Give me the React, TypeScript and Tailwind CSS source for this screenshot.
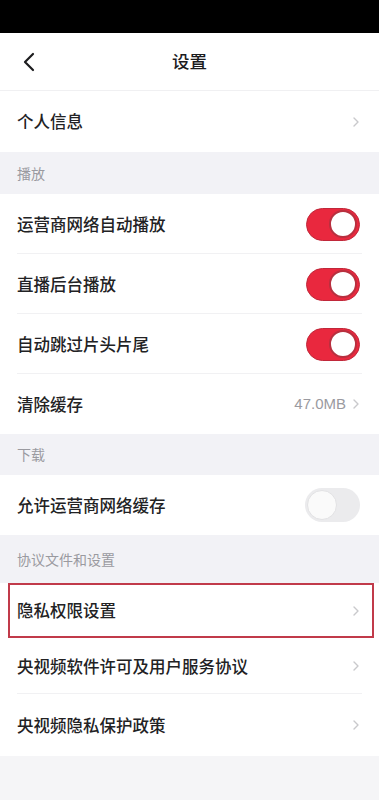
import React from "react";

const Chevron = () => (
  <svg width="8" height="12" viewBox="0 0 8 12" fill="none">
    <path d="M2 2l4 4-4 4" stroke="#c9c9cc" strokeWidth="1.4" strokeLinecap="round" strokeLinejoin="round" />
  </svg>
);

const Toggle = ({ on }: { on: boolean }) =>
  on ? (
    <div className="w-[54px] h-[33px] rounded-full bg-[#e9283e] border border-[#c0283a] flex items-center justify-end pr-[2px]">
      <div className="w-[28px] h-[28px] rounded-full bg-white border-2 border-[#b8303f]" />
    </div>
  ) : (
    <div className="w-[55px] h-[34px] rounded-full bg-[#ebebed] flex items-center justify-start pl-[2px]">
      <div className="w-[30px] h-[30px] rounded-full bg-[#fafafa] border border-[#e2e2e4]" />
    </div>
  );

const Row = ({
  label,
  right,
  h = "h-[60px]",
  divider = true,
  highlight = false,
}: {
  label: string;
  right: React.ReactNode;
  h?: string;
  divider?: boolean;
  highlight?: boolean;
}) => (
  <div className={`relative bg-white ${h} flex items-center px-[17px]`}>
    <span className="flex-1 text-[16.5px] font-medium text-[#222224]">{label}</span>
    <div className="flex items-center gap-[6px] pr-[2px]">{right}</div>
    {divider && <div className="absolute left-[17px] right-[17px] bottom-0 h-px bg-[#f1f1f3]" />}
    {highlight && <div className="absolute left-[8px] right-[5px] top-0 bottom-0 border-2 border-[#c13a4a]" />}
  </div>
);

const Section = ({ label, h }: { label: string; h: string }) => (
  <div className={`bg-[#f2f2f6] ${h} flex items-center px-[17px] text-[14px] text-[#9a9aa0]`}>{label}</div>
);

export default function App() {
  return (
    <div
      className="w-[379px] min-h-[800px] bg-[#f5f5f7] flex flex-col"
      style={{ fontFamily: '"Noto Sans CJK SC", "Noto Sans", sans-serif' }}
    >
      <div className="h-[33px] bg-black" />
      <div className="relative h-[58px] bg-white flex items-center justify-center border-b border-[#f0f0f2]">
        <div className="absolute left-[22px] top-0 bottom-0 flex items-center">
          <svg width="14" height="20" viewBox="0 0 14 20" fill="none">
            <path d="M11 2L3 10l8 8" stroke="#1c1c1e" strokeWidth="2.2" strokeLinecap="round" strokeLinejoin="round" />
          </svg>
        </div>
        <span className="text-[17.5px] font-medium text-[#1c1c1e]">设置</span>
      </div>
      <Row label="个人信息" right={<Chevron />} h="h-[61px]" divider={false} />
      <Section label="播放" h="h-[42px]" />
      <Row label="运营商网络自动播放" right={<Toggle on />} />
      <Row label="直播后台播放" right={<Toggle on />} />
      <Row label="自动跳过片头片尾" right={<Toggle on />} />
      <Row
        label="清除缓存"
        right={
          <>
            <span className="text-[15px] text-[#9a9aa0]" style={{ fontFamily: '"Liberation Sans", sans-serif' }}>47.0MB</span>
            <Chevron />
          </>
        }
        divider={false}
      />
      <Section label="下载" h="h-[41px]" />
      <Row label="允许运营商网络缓存" right={<Toggle on={false} />} divider={false} />
      <Section label="协议文件和设置" h="h-[48px]" />
      <Row label="隐私权限设置" right={<Chevron />} h="h-[55px]" divider={false} highlight />
      <Row label="央视频软件许可及用户服务协议" right={<Chevron />} h="h-[56px]" />
      <Row label="央视频隐私保护政策" right={<Chevron />} h="h-[62px]" divider={false} />
    </div>
  );
}
